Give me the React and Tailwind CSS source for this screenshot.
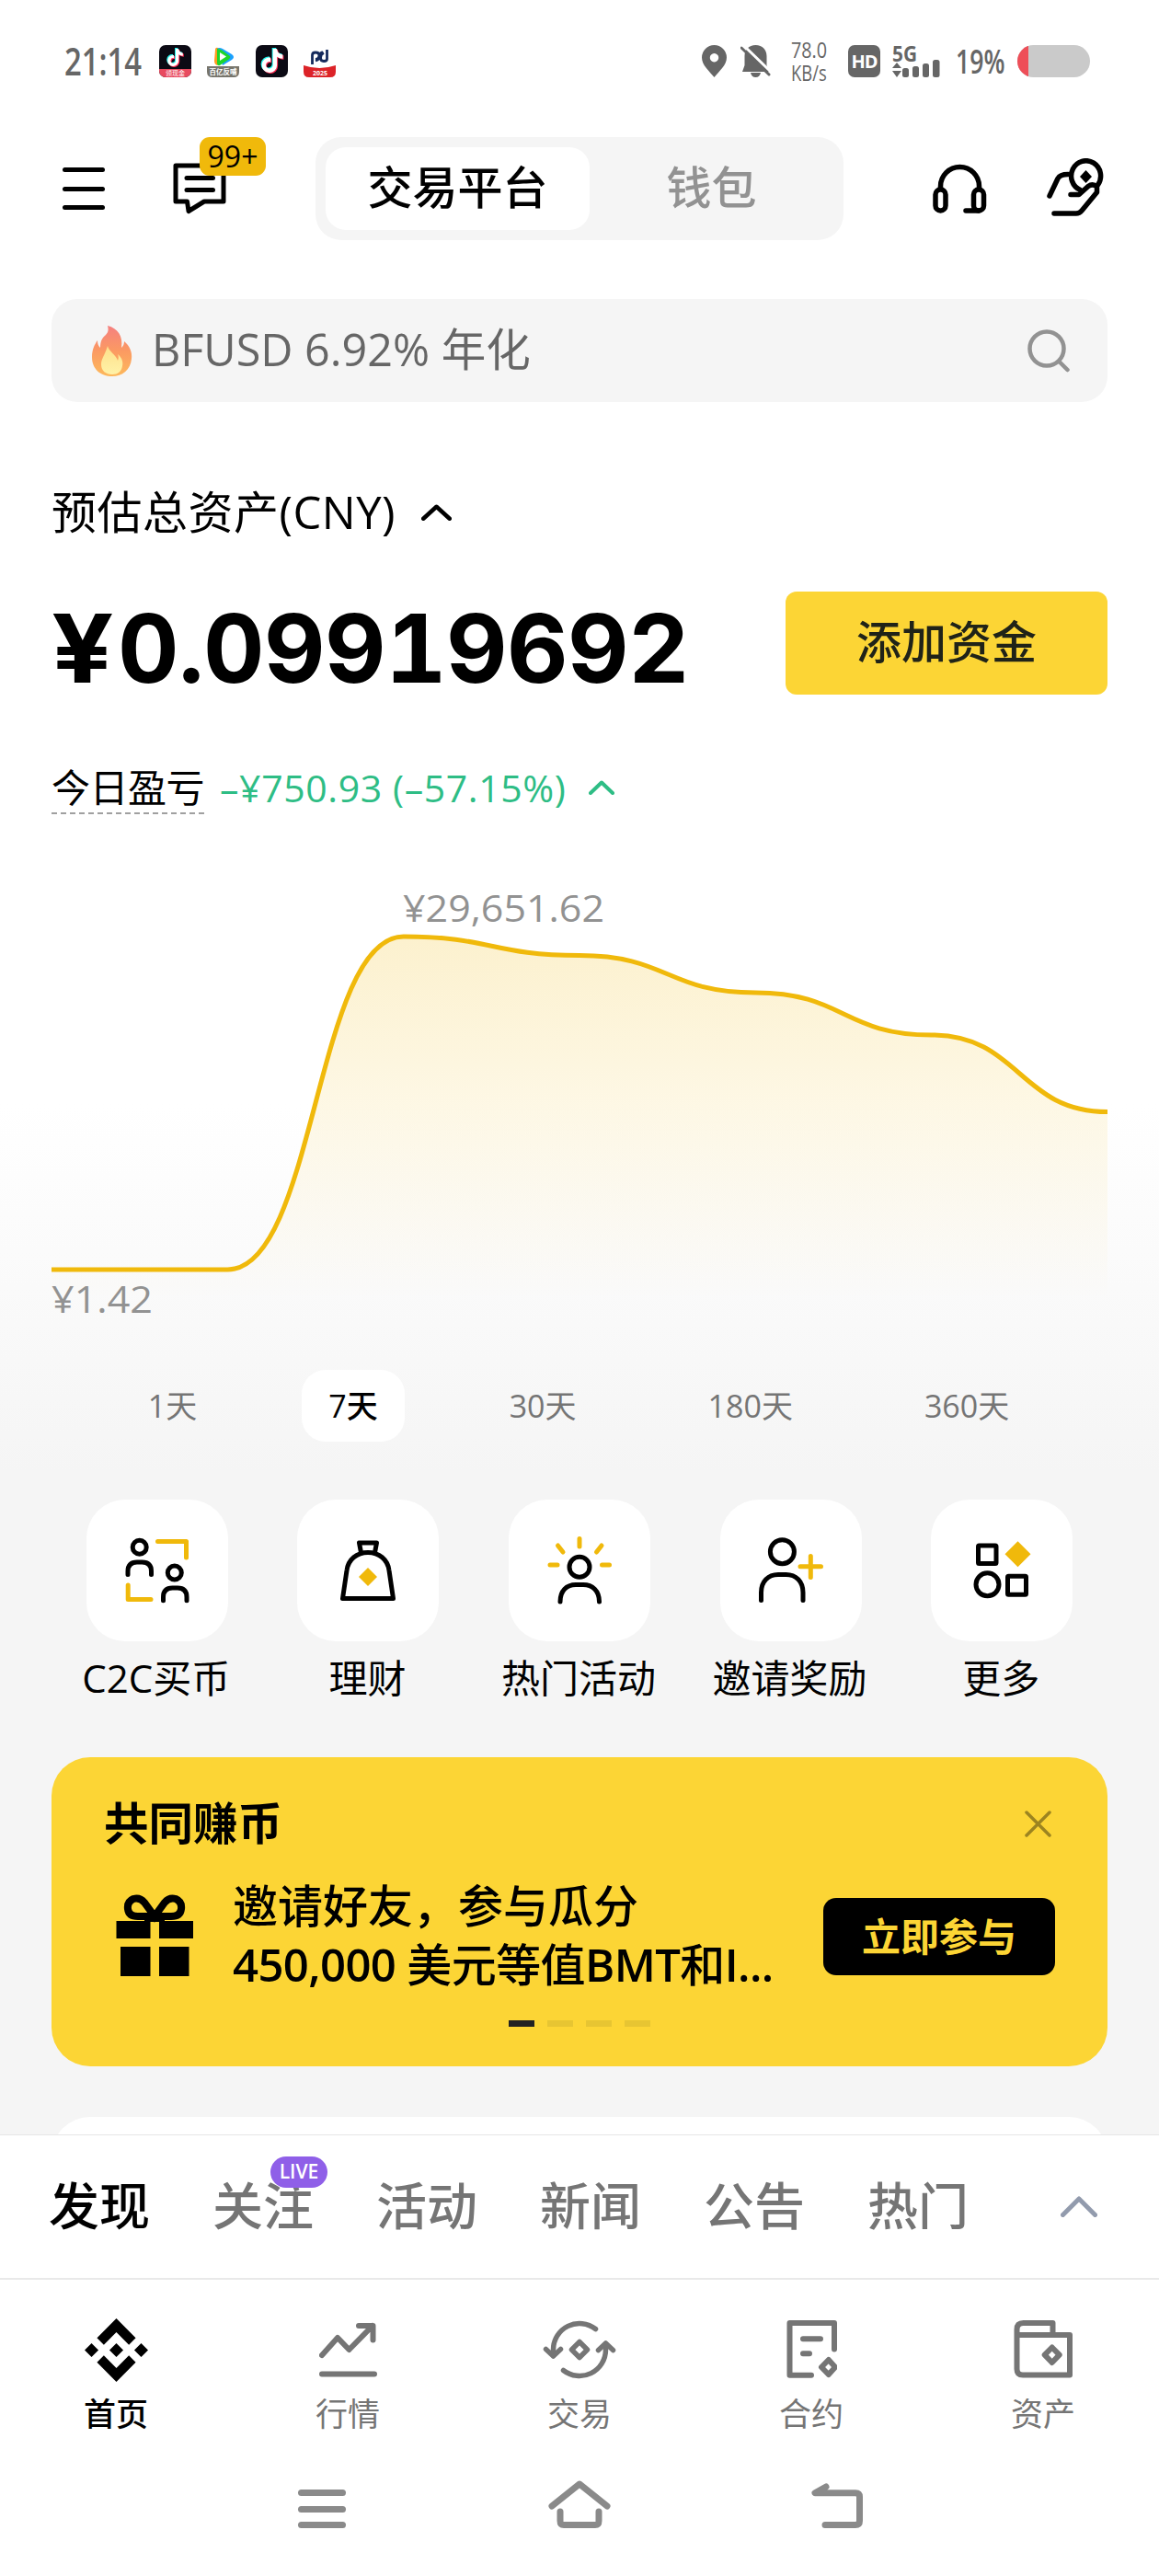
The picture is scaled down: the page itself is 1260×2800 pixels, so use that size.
import React from 'react'
import { FaTiktok } from 'react-icons/fa6'

const RANGES = ['1天', '7天', '30天', '180天', '360天']

const NEWS_TABS = [
  { label: '发现', active: true },
  { label: '关注', live: true },
  { label: '活动' },
  { label: '新闻' },
  { label: '公告' },
  { label: '热门' },
]

// 描边图标的公共容器
const Stroke = ({ w, h, width = 5, color = '#000', children }) => (
  <svg
    width={w}
    height={h}
    viewBox={`0 0 ${w} ${h}`}
    fill="none"
    stroke={color}
    strokeWidth={width}
    strokeLinecap="round"
    strokeLinejoin="round"
    className="shrink-0"
  >
    {children}
  </svg>
)

const Chevron = ({ w, h, color, width = 5 }) => (
  <Stroke w={w} h={h} color={color} width={width}>
    <path d={`M${width / 2} ${h - width / 2} L${w / 2} ${width / 2 + 0.5} L${w - width / 2} ${h - width / 2}`} />
  </Stroke>
)

const TiktokTile = ({ promo }) => (
  <div className="relative h-[35px] w-[35px] overflow-hidden rounded-[7px] bg-[#0b0a14]">
    <div className={promo ? 'absolute left-[8px] top-[4px]' : 'absolute left-[5px] top-[4px]'}>
      <FaTiktok size={promo ? 19 : 26} className="absolute -left-px -top-px text-[#25f4ee]" />
      <FaTiktok size={promo ? 19 : 26} className="absolute left-px top-px text-[#fe2c55]" />
      <FaTiktok size={promo ? 19 : 26} className="absolute left-0 top-0 text-white" />
    </div>
    {promo && (
      <div className="absolute inset-x-0 bottom-0 flex h-[9px] items-center justify-center bg-[#e84a5f] text-[7px] leading-none text-white">
        领现金
      </div>
    )}
  </div>
)

const StatusBar = () => (
  <div className="flex h-[149px] items-start pt-[46px] text-[#666]">
    <div className="flex h-[41px] items-center">
      <div className="ml-[70px] w-[103px]">
        <div className="w-[110px] origin-left scale-x-[0.8] text-[41px] font-semibold leading-none">21:14</div>
      </div>
      <TiktokTile promo />
      <div className="ml-[17px]">
        <svg width="35" height="35" viewBox="0 0 35 35">
          <path d="M9 5 Q9 2 12 3 L15 5 V20 L11 22 Q8 21 8 17 Z" fill="#ff9a1f" />
          <path d="M11 4 Q13 2 17 4 L27 10 Q31 13 27 16 L17 22 Z" fill="#1aa0ff" />
          <path d="M11 4 Q14 4 17 6 L25 12 Q26 14 23 16 L14 22 Q11 23 11 19 Z" fill="#1ed52a" />
          <path d="M14 8 L21 12.5 L14 17 Z" fill="#fff" />
          <path d="M0 23 H35 V29 Q35 35 29 35 H6 Q0 35 0 29 Z" fill="#77756c" />
          <text x="17.5" y="32" fontSize="7.5" fontWeight="700" textAnchor="middle" fill="#fff">百亿反哺</text>
        </svg>
      </div>
      <div className="ml-[18px]">
        <TiktokTile />
      </div>
      <div className="ml-[17px]">
        <svg width="35" height="35" viewBox="0 0 35 35">
          <path
            d="M9.500 21 V11 Q9.500 8 13 8 Q17 8 17 11 Q17 15 13 15.500 M25.500 5 V15 Q25.500 17.500 22 17.500 Q18.500 17.500 18.500 14 Q18.500 10 22 8.500 M13 17 Q17 16 17.500 12 Q18 8 21 8"
            fill="none"
            stroke="#152a5c"
            strokeWidth="2.800"
          />
          <path d="M0 22 Q17 28 35 22 V29 Q35 35 29 35 H6 Q0 35 0 29 Z" fill="#dc2328" />
          <text x="18" y="33" fontSize="7" fontWeight="700" textAnchor="middle" fill="#fff">2025</text>
        </svg>
      </div>
    </div>

    <div className="ml-[398px] flex h-[41px] items-center">
      <svg width="27" height="35" viewBox="0 0 27 35">
        <path fillRule="evenodd" d="M13.5 0 A13.5 13.5 0 0 1 27 13.5 C27 22 19 28 13.5 35 C8 28 0 22 0 13.5 A13.5 13.5 0 0 1 13.5 0 Z M13.5 9 a4.7 4.7 0 1 0 0.01 0 Z" fill="#666" />
      </svg>
      <svg width="33" height="35" viewBox="0 0 33 35" className="ml-[15px]">
        <path d="M16.5 0 C24 0 28.5 5 28.5 12 V22 L31 29 H2 L4.500 22 V12 C4.500 5 9 0 16.500 0 Z M11 30 H22 Q21 35 16.500 35 Q12 35 11 30 Z" fill="#666" />
        <path d="M3 0 L34 30" stroke="#fff" strokeWidth="3" />
        <path d="M1 3 L31 32" stroke="#666" strokeWidth="3" strokeLinecap="round" />
      </svg>
      <div className="ml-[22px] w-[62px] text-[23px] font-medium leading-[25px]">
        <div className="w-[60px] origin-left scale-x-[0.86]">78.0</div>
        <div className="w-[60px] origin-left scale-x-[0.8]">KB/s</div>
      </div>
      <div className="flex h-[35px] w-[35px] items-center justify-center rounded-[7px] bg-[#666] text-[20px] font-bold leading-none tracking-[-1px] text-white">
        HD
      </div>
      <svg width="53" height="36" viewBox="0 0 53 36" fill="#666" className="ml-[13px] overflow-visible">
        <text x="0" y="17.500" fontSize="23" fontWeight="700" textLength="27" lengthAdjust="spacingAndGlyphs">5G</text>
        <path d="M0 25 L5 19 L10 25 Z M0 28 H10 L5 35 Z" />
        <rect x="11" y="25" width="7" height="10" rx="2.500" />
        <rect x="22" y="23" width="7" height="12" rx="2.500" />
        <rect x="33" y="20" width="7" height="15" rx="2.500" />
        <rect x="44" y="16" width="7.500" height="19" rx="2.500" />
      </svg>
      <div className="ml-[16px] w-[67px]">
        <div className="w-[80px] origin-left scale-x-[0.74] text-[36px] font-semibold leading-none">19%</div>
      </div>
      <div className="h-[35px] w-[79px] overflow-hidden rounded-full bg-[#cacaca]">
        <div className="h-full w-[12px] bg-[#ee4e58]" />
      </div>
    </div>
  </div>
)

const Header = () => (
  <div className="flex h-[112px] items-center">
    <div className="ml-[68px] flex w-[46px] flex-col gap-[15.500px]">
      <div className="h-[5px] rounded-full bg-black" />
      <div className="h-[5px] rounded-full bg-black" />
      <div className="h-[5px] rounded-full bg-black" />
    </div>
    <div className="relative ml-[73px]">
      <Stroke w={60} h={58}>
        <path d="M4 4 H56 V43 H35 L18 53.500 L16.500 43 H4 Z" />
        <path d="M16 17.500 H44.500 M16 30.500 H44.500" />
      </Stroke>
      <div className="absolute -top-[27px] left-[30px] flex h-[42px] w-[72px] items-center justify-center rounded-[11px] bg-[#f0b90b] text-[32px] font-medium leading-none">
        99+
      </div>
    </div>
    <div className="ml-[96px] flex h-[112px] w-[574px] rounded-[28px] bg-[#f5f5f5] p-[11px] text-[49px]">
      <div className="flex w-[287px] items-center justify-center rounded-[22px] bg-white pb-[3px] font-medium">交易平台</div>
      <div className="flex flex-1 items-center justify-center pb-[3px] font-medium text-[#929292]">钱包</div>
    </div>
    <div className="ml-[96px]">
      <Stroke w={60} h={57} width={5.5}>
        <path d="M9.500 28 V25.500 a21 21 0 0 1 42 0 V28" />
        <rect x="4" y="29" width="11" height="23" rx="5.500" />
        <rect x="45.500" y="29" width="11" height="23" rx="5.500" />
        <path d="M37 52 H51" />
      </Stroke>
    </div>
    <div className="ml-[64px]">
      <Stroke w={64} h={66} width={5.5}>
        <path d="M4 41 L13 22 Q15.500 17.500 24 17.500" />
        <path d="M37.500 34.500 A16 16.500 0 1 1 56.500 29" />
        <path d="M43.500 13 L50 20 L43.500 27 L37 20 Z" fill="#000" stroke="none" />
        <path d="M27 39.500 H36 L46 30.500 Q51 27 55.500 31 V37 L39 57 Q36.500 60 33 60 H9" />
      </Stroke>
    </div>
  </div>
)

const Flame = () => (
  <svg width="44" height="55" viewBox="0 0 44 55">
    <defs>
      <linearGradient id="flameOuter" x1="0" y1="0" x2="0" y2="1">
        <stop offset="0" stopColor="#f58080" />
        <stop offset="0.500" stopColor="#fb9a62" />
        <stop offset="1" stopColor="#fdb95c" />
      </linearGradient>
      <linearGradient id="flameInner" x1="0" y1="0" x2="0" y2="1">
        <stop offset="0" stopColor="#fde08a" />
        <stop offset="1" stopColor="#fff2a8" />
      </linearGradient>
    </defs>
    <path d="M17 0 C28 3 34 11 32 24 C34 22 35 20 35 17 C41 22 44 29 43 36 C42 48 33 55 22 55 C9 55 0 47 0 34 C0 26 3 20 6 16 C6 20 7 22 9 24 C9 17 11 13 15 10 C18 7 18 4 17 0 Z" fill="url(#flameOuter)" />
    <path d="M17 22 C18 28 26 31 28 38 C29 35 29 33 28 31 C33 35 34 40 33 44 C32 50 28 53 22 53 C15 53 10 49 10 42 C10 36 14 32 17 22 Z" fill="url(#flameInner)" />
  </svg>
)

const SearchBar = () => (
  <div className="mx-[56px] mt-[64px] flex h-[112px] items-center rounded-[28px] bg-[#f5f5f5] pl-[44px] pr-[40px]">
    <Flame />
    <div className="ml-[21px] flex-1 pb-[3px] text-[48.500px] leading-none text-[#666]">BFUSD 6.92% 年化</div>
    <Stroke w={47} h={47} width={4.5} color="#929292">
      <circle cx="21" cy="21" r="18.500" />
      <path d="M35 35.500 L43.500 44" />
    </Stroke>
  </div>
)

const Balance = () => (
  <div className="px-[56px]">
    <div className="mt-[90px] flex h-[60px] items-center">
      <span className="pb-[2px] text-[49px] leading-none tracking-[0.500px]">预估总资产(CNY)</span>
      <span className="ml-[28px]">
        <Chevron w={33} h={18} color="#000" width={4.5} />
      </span>
    </div>
    <div className="mt-[56px] flex h-[112px] items-center justify-between">
      <div className="flex pt-[11px] font-[Inter] text-[103px] font-bold leading-none tabular-nums tracking-[-0.600px]">
        <span className="block w-[72px]">
          <span className="block w-[66px] origin-left scale-x-[1.15]">¥</span>
        </span>
        <span>0.09919692</span>
      </div>
      <button className="h-[112px] w-[350px] rounded-[12px] bg-[#fcd535] pb-[3px] text-[49px] font-medium text-[#202318]">添加资金</button>
    </div>
    <div className="mt-[75px] flex h-[55px] items-start text-[42px] leading-[52px]">
      <div className="h-[55px] border-b-2 border-dashed border-[#a0a0a0] tracking-[-0.500px]">今日盈亏</div>
      <div className="ml-[17px] flex items-center text-[#2ebd85]">
        <span className="text-[41px] tracking-[0.600px]">–¥750.93 (–57.15%)</span>
        <span className="ml-[24px]">
          <Chevron w={28} h={16} width={4} color="#2ebd85" />
        </span>
      </div>
    </div>
  </div>
)

const VALUES_Y = [440, 440, 78, 98.5, 139, 185, 268.5]

const AssetChart = () => {
  const step = 1148 / 6
  // 相邻两点之间用水平切线的三次贝塞尔连接
  const line = VALUES_Y.reduce((d, y, i) => {
    if (i === 0) return `M0 ${y}`
    const mid = step * (i - 0.5)
    return `${d} C${mid} ${VALUES_Y[i - 1]} ${mid} ${y} ${step * i} ${y}`
  }, '')

  return (
    <svg width="1148" height="520" viewBox="0 0 1148 520" className="mx-[56px] mt-[55px] block">
      <defs>
        <linearGradient id="area" x1="0" y1="78" x2="0" y2="472" gradientUnits="userSpaceOnUse">
          <stop offset="0" stopColor="#f0b90b" stopOpacity="0.200" />
          <stop offset="1" stopColor="#f0b90b" stopOpacity="0" />
        </linearGradient>
      </defs>
      <path d={`${line} V472 H0 Z`} fill="url(#area)" />
      <path d={line} fill="none" stroke="#f0b90b" strokeWidth="5" />
      <text x="382" y="61.500" fontSize="40" textLength="219" lengthAdjust="spacingAndGlyphs" fill="#929292">¥29,651.62</text>
      <text x="0" y="487" fontSize="40" textLength="110" lengthAdjust="spacingAndGlyphs" fill="#929292">¥1.42</text>
    </svg>
  )
}

const RangeTabs = () => (
  <div className="mt-[29px] flex h-[78px] justify-center gap-[85px] pr-[2px] text-[34px]">
    {RANGES.map((r) => (
      <div
        key={r}
        className={
          r === '7天'
            ? 'flex items-center rounded-[26px] bg-white px-[29px] font-medium text-black'
            : 'flex items-center px-[29px] text-[#757575]'
        }
      >
        {r}
      </div>
    ))}
  </div>
)

const GOLD = '#f0b90b'

const ACTIONS = [
  {
    label: 'C2C买币',
    icon: (
      <Stroke w={72} h={72}>
        <circle cx="16.700" cy="10.700" r="7.500" />
        <path d="M4 40.500 V37 Q4 27 14 27 H19.500 Q29.500 27 29.500 37 V40.500" />
        <circle cx="54.800" cy="38.500" r="7.500" />
        <path d="M42.500 68.700 V65 Q42.500 55 52.500 55 H58 Q68 55 68 65 V68.700" />
        <path d="M36.500 4.500 H67.500 V22 M4.200 52 V67.500 H29" stroke={GOLD} />
      </Stroke>
    ),
  },
  {
    label: '理财',
    icon: (
      <Stroke w={62} h={68}>
        <path d="M23.500 14.500 L21.500 4 H40.500 L38.500 14.500" />
        <path d="M31 14.500 C19 14.500 9.500 22 8 34 L3.500 64.500 H58.500 L54 34 C52.500 22 43 14.500 31 14.500 Z" />
        <path d="M31 31 L41 41 L31 51 L21 41 Z" fill={GOLD} stroke="none" />
      </Stroke>
    ),
  },
  {
    label: '热门活动',
    icon: (
      <Stroke w={70} h={76}>
        <circle cx="35" cy="34.300" r="11" />
        <path d="M14 72 C14 60 21 53.500 31 53.500 H39 C49 53.500 56.500 60 56.500 72" />
        <path d="M35 3.500 V12 M3 32 H11 M59.500 32 H67.500 M11.500 11 L17 18 M59 11 L53.500 18" stroke={GOLD} />
      </Stroke>
    ),
  },
  {
    label: '邀请奖励',
    icon: (
      <Stroke w={72} h={74}>
        <circle cx="26.400" cy="16.700" r="13" />
        <path d="M3.500 69.500 V61 C3.500 49 11 41.500 22 41.500 H30.500 C41.500 41.500 49 49 49 61 V69.500" />
        <path d="M46 32.700 H68.500 M57.300 21.500 V44.500" stroke={GOLD} />
      </Stroke>
    ),
  },
  {
    label: '更多',
    icon: (
      <Stroke w={64} h={66}>
        <rect x="6.500" y="6" width="19.500" height="19.500" rx="1" />
        <circle cx="16.500" cy="48.300" r="12.500" />
        <rect x="38.500" y="39.300" width="20" height="20" rx="1" />
        <path d="M49.500 1.300 L63.500 15.300 L49.500 29.300 L35.500 15.300 Z" fill={GOLD} stroke="none" />
      </Stroke>
    ),
  },
]

const QuickActions = () => (
  <div className="mx-[56px] mt-[63px] grid h-[230px] grid-cols-5">
    {ACTIONS.map((a) => (
      <div key={a.label} className="flex flex-col items-center">
        <div className="flex h-[154px] w-[154px] items-center justify-center rounded-[42px] bg-white">{a.icon}</div>
        <div className="mr-[2px] mt-[14px] whitespace-nowrap text-[42px] leading-[52px]">{a.label}</div>
      </div>
    ))}
  </div>
)

const Gift = () => (
  <svg width="84" height="90" viewBox="0 0 84 90">
    <path d="M0.500 30 H37.500 V49 H0.500 Z M47 30 H84 V49 H47 Z M5 58 H37.500 V90 H5 Z M47 58 H79.500 V90 H47 Z" />
    <path
      d="M42 25 L31 10 Q26 4 19 6 Q12 9 13 17 Q14 25 24 25 H60 Q70 25 71 17 Q72 9 65 6 Q58 4 53 10 Z"
      fill="none"
      stroke="#000"
      strokeWidth="8"
    />
    <path d="M31 22 H53 V31 H31 Z" />
  </svg>
)

const Banner = () => (
  <div className="mx-[56px] mt-[50px] h-[336px] rounded-[42px] bg-[#fcd535] px-[57px]">
    <div className="flex items-center justify-between pr-[4px] pt-[41px]">
      <div className="-mt-[2px] text-[48.500px] font-bold leading-[64px]">共同赚币</div>
      <Stroke w={29} h={29} width={3.5} color="#9c8420">
        <path d="M2 2 L27 27 M27 2 L2 27" />
      </Stroke>
    </div>
    <div className="mt-[28px] flex h-[128px] items-center">
      <div className="ml-[13px] mt-[-4px]">
        <Gift />
      </div>
      <div className="-mt-[5px] ml-[43px] w-[600px] whitespace-nowrap text-[49px] font-medium leading-[64px]">
        <div>邀请好友，参与瓜分</div>
        <div className="tracking-[-0.600px]">
          <span className="font-semibold">450,000</span> 美元等值<span className="font-semibold">BMT</span>和
          <span className="font-semibold">I...</span>
        </div>
      </div>
      <button className="ml-[44px] h-[84px] w-[252px] shrink-0 rounded-[14px] bg-black pb-[2px] text-[42px] font-bold text-[#fcd535]">
        立即参与
      </button>
    </div>
    <div className="mt-[27px] flex justify-center gap-[14px]">
      <div className="h-[7px] w-[28px] bg-[#222]" />
      <div className="h-[7px] w-[28px] bg-[#e7c532]" />
      <div className="h-[7px] w-[28px] bg-[#e7c532]" />
      <div className="h-[7px] w-[28px] bg-[#e7c532]" />
    </div>
  </div>
)

const NewsTabs = () => (
  <div className="flex h-[156px] items-center border-t border-[#e6e6e6] bg-white pl-[53px] pr-[67px] pb-[5px] text-[55px] font-medium leading-none">
    <div className="flex flex-1 gap-[68px]">
      {NEWS_TABS.map((t) => (
        <div key={t.label} className={t.active ? 'relative text-black' : 'relative text-[#757575]'}>
          {t.label}
          {t.live && (
            <div className="absolute left-[63px] top-[-25px] flex h-[34px] w-[62px] items-center justify-center rounded-full bg-[#8f5fe8] text-[21px] font-semibold text-white">
              LIVE
            </div>
          )}
        </div>
      ))}
    </div>
    <div className="pt-[4px]">
      <Chevron w={40} h={23} width={5} color="#929bad" />
    </div>
  </div>
)

const GRAY = '#757575'

const NAV = [
  {
    label: '首页',
    icon: (
      <svg width="69" height="69" viewBox="0 0 68.800 68.800">
        <path d="M34.400 0 L55.400 21.200 L48 28.600 L34.400 15 L20.800 28.600 L13.400 21.200 Z" />
        <path d="M34.400 68.800 L55.400 47.600 L48 40.200 L34.400 53.800 L20.800 40.200 L13.400 47.600 Z" />
        <path d="M34.400 26.900 L41.900 34.400 L34.400 41.900 L26.900 34.400 Z M7.500 26.900 L15 34.400 L7.500 41.900 L0 34.400 Z M61.300 26.900 L68.800 34.400 L61.300 41.900 L53.800 34.400 Z" />
      </svg>
    ),
  },
  {
    label: '行情',
    icon: (
      <Stroke w={63} h={60} color={GRAY} width={6}>
        <path d="M3 36 L20 17 L32.500 30 L58 4 M43 4 H58.500 V19.500 M3 56.500 H60" />
      </Stroke>
    ),
  },
  {
    label: '交易',
    icon: (
      <Stroke w={80} h={68} color={GRAY} width={5.5}>
        <g id="swapHalf">
          <path d="M11.500 40 V34 A28.500 28.500 0 0 1 57.500 11.500" />
          <path d="M3.500 33.500 L11.500 41 L19.500 33.500" />
        </g>
        <use href="#swapHalf" transform="rotate(180 40 34)" />
        <path d="M40 25.500 L48.500 34 L40 42.500 L31.500 34 Z" />
      </Stroke>
    ),
  },
  {
    label: '合约',
    icon: (
      <Stroke w={56} h={66} color={GRAY} width={6}>
        <path d="M53 32.500 V4 H4.500 V60.700 H28 M19 21.300 H38 M19 37.300 H26" />
        <path d="M46.800 44 L54 52 L46.800 60 L39 52 Z" />
      </Stroke>
    ),
  },
  {
    label: '资产',
    icon: (
      <Stroke w={66} h={66} color={GRAY} width={6}>
        <path d="M4.500 17 V54 Q4.500 60.500 11 60.500 H62 V17 H4.500 V11 Q4.500 4 11.500 4 H43.500 V16" />
        <path d="M42.700 30.500 L50.700 38.700 L42.700 47 L34.700 38.700 Z" />
      </Stroke>
    ),
  },
]

const BottomNav = () => (
  <div className="grid h-[200px] grid-cols-5 border-t-2 border-[#e9e9e9] bg-white pt-[40px]">
    {NAV.map((n, i) => (
      <div
        key={n.label}
        className={i === 0 ? 'flex flex-col items-center font-medium text-black' : 'flex flex-col items-center text-[#757575]'}
      >
        <div className="flex h-[72px] items-center">{n.icon}</div>
        <div className="mt-[11px] text-[35px] leading-[46px]">{n.label}</div>
      </div>
    ))}
  </div>
)

const SystemNav = () => (
  <div className="flex flex-1 items-start bg-white pt-[20px]">
    <div className="ml-[324px] mt-[10px] flex w-[52px] flex-col gap-[10.500px]">
      <div className="h-[7px] rounded-full bg-[#8a8a8a]" />
      <div className="h-[7px] rounded-full bg-[#8a8a8a]" />
      <div className="h-[7px] rounded-full bg-[#8a8a8a]" />
    </div>
    <div className="ml-[220px]">
      <Stroke w={68} h={54} color="#8a8a8a" width={7}>
        <path d="M4 28 L34 4 L64 28" />
        <path d="M13 34 V44 Q13 48.500 17 48.500 H51 Q55 48.500 55 44 V34" />
      </Stroke>
    </div>
    <div className="ml-[216px]">
      <Stroke w={60} h={54} color="#8a8a8a" width={7}>
        <path d="M18 7 L6 13.700 H50 Q54.500 13.700 54.500 18 V44 Q54.500 48.500 50 48.500 H17" />
      </Stroke>
    </div>
  </div>
)

export default function App() {
  return (
    <div className="flex h-[2800px] w-[1260px] flex-col overflow-hidden bg-white font-['Open_Sans','Noto_Sans_CJK_SC',sans-serif] text-black">
      <div className="h-[2320px] shrink-0 overflow-hidden bg-[linear-gradient(180deg,#ffffff_1200px,#f5f5f5_1600px)]">
        <StatusBar />
        <Header />
        <SearchBar />
        <Balance />
        <AssetChart />
        <RangeTabs />
        <QuickActions />
        <Banner />
        <div className="mx-[56px] mt-[55px] h-[100px] rounded-[42px] bg-white" />
      </div>
      <NewsTabs />
      <BottomNav />
      <SystemNav />
    </div>
  )
}
